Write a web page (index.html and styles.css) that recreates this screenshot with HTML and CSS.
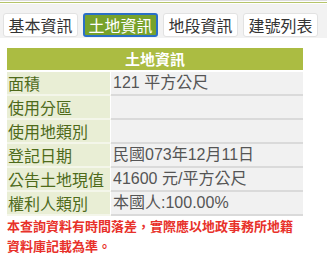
FILE: index.html
```html
<!DOCTYPE html>
<html lang="zh-Hant">
<head>
<meta charset="utf-8">
<link rel="stylesheet" href="styles.css">
</head>
<body>
<div class="topline"></div>
<div class="tabbar">
  <span class="tab">基本資訊</span>
  <span class="tab active">土地資訊</span>
  <span class="tab">地段資訊</span>
  <span class="tab">建號列表</span>
</div>
<table class="info">
  <thead>
    <tr><th colspan="2">土地資訊</th></tr>
  </thead>
  <tbody>
    <tr><td class="lbl">面積</td><td class="val">121 平方公尺</td></tr>
    <tr><td class="lbl">使用分區</td><td class="val"></td></tr>
    <tr><td class="lbl">使用地類別</td><td class="val"></td></tr>
    <tr><td class="lbl">登記日期</td><td class="val">民國073年12月11日</td></tr>
    <tr><td class="lbl">公告土地現值</td><td class="val">41600 元/平方公尺</td></tr>
    <tr><td class="lbl">權利人類別</td><td class="val">本國人:100.00%</td></tr>
  </tbody>
</table>
<p class="note">本查詢資料有時間落差，實際應以地政事務所地籍資料庫記載為準。</p>
</body>
</html>
```
FILE: styles.css
```css
html, body {
  margin: 0;
  padding: 0;
  background: #fff;
  font-family: "Liberation Sans", "Noto Sans CJK TC", sans-serif;
}
.topline {
  height: 1px;
  border-top: 1px solid #dcdcdc;
  border-bottom: 1px solid #b5c46a;
  margin-bottom: 1px;
}
.tabbar {
  background: #f2f2f2;
  padding: 9px 0 1px 3px;
  display: flex;
  gap: 5px;
  height: 24px;
}
.tab {
  box-sizing: border-box;
  width: 75px;
  height: 24px;
  background: #fff;
  border: 1px solid #e2e2e2;
  border-radius: 3px;
  font-family: "Noto Sans CJK TC", sans-serif;
  font-size: 16px;
  line-height: 22px;
  color: #333;
  text-align: center;
}
.tab.active {
  background: #77a22b;
  border: 2px solid #2a6fc7;
  color: #fff;
  line-height: 20px;
}
.info {
  margin: 10px 0 0 7px;
  width: 296px;
  border-collapse: separate;
  border-spacing: 0;
}
.info th {
  background: #abbc42;
  color: #fff;
  font-family: "Noto Sans CJK TC", sans-serif;
  font-size: 15px;
  font-weight: bold;
  height: 22px;
  padding: 0;
  line-height: 22px;
  border-bottom: 2px solid #fff;
}
.info td {
  height: 22px;
  padding: 0 0 0 1px;
  font-size: 16px;
  line-height: 22px;
  border-bottom: 2px solid #dadada;
}
.info td.lbl {
  width: 102px;
  background: #e9eed5;
  color: #4e6a1a;
  font-family: "Noto Sans CJK TC", sans-serif;
  border-right: 1px solid #fff;
  border-bottom-color: #f4f6ea;
}
.info td.val {
  background: #f1f1f1;
  color: #555;
  padding-left: 2px;
}
.note {
  margin: 0 0 0 7px;
  width: 288px;
  color: #e8312a;
  font-family: "Noto Sans CJK TC", sans-serif;
  font-weight: bold;
  font-size: 13px;
  line-height: 20px;
}
```
